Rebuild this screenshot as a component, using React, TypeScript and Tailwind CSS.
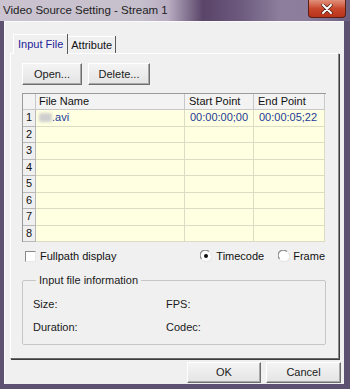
import React from "react";

const font = { fontFamily: '"Liberation Sans", Arial, sans-serif' };

const rows = [1, 2, 3, 4, 5, 6, 7, 8];

const Btn: React.FC<{ label: string; w: string; h?: string }> = ({ label, w, h = "h-[22px]" }) => (
  <div
    className={`${w} ${h} flex items-center justify-center text-[11px] text-[#1a1a1a] bg-gradient-to-b from-[#f4f4f4] to-[#e4e4e4] border border-t-white border-l-white border-r-[#6f6f6f] border-b-[#6f6f6f] shadow-[inset_-1px_-1px_0_#a8a8a8]`}
  >
    {label}
  </div>
);

const Radio: React.FC<{ on?: boolean }> = ({ on }) => (
  <svg width="12" height="12" viewBox="0 0 12 12">
    <circle cx="6" cy="6" r="5" fill="#fff" />
    <path d="M1.6 9 A5 5 0 0 1 9 1.6" stroke="#8c8c8c" strokeWidth="1.2" fill="none" />
    <path d="M10.4 3 A5 5 0 0 1 3 10.4" stroke="#e6e6e6" strokeWidth="1.2" fill="none" />
    {on && <circle cx="6" cy="6" r="2" fill="#111" />}
  </svg>
);

export default function App() {
  return (
    <div
      className="w-[350px] h-[389px] flex flex-col bg-[#5c5170] overflow-hidden"
      style={font}
    >
      {/* title bar */}
      <div className="h-[21px] flex items-start bg-[linear-gradient(90deg,#cbc4d0_0%,#c6bfcc_40%,#b9adc2_48%,#5a4569_58%,#6b587c_68%,#8c7e9c_80%,#8b7d9b_88%,#6d5f80_100%)]">
        <span className="pl-[3px] pt-[3px] text-[11.5px] text-[#1e1e1e] leading-[14px]">
          Video Source Setting - Stream 1
        </span>
        <div className="ml-auto mr-[4px] w-[38px] h-[18px] rounded-b-[4px] border border-t-0 border-[#5a2018] bg-gradient-to-b from-[#e0907a] via-[#c8482c] to-[#b83218] flex items-center justify-center">
          <svg width="12" height="10" viewBox="0 0 12 10">
            <path d="M2 1 L10 9 M10 1 L2 9" stroke="#3a1410" strokeWidth="3.2" strokeLinecap="round" />
            <path d="M2 1 L10 9 M10 1 L2 9" stroke="#ffffff" strokeWidth="2" strokeLinecap="round" />
          </svg>
        </div>
      </div>

      {/* client */}
      <div className="flex h-[363px]">
        <div className="w-[4px]" />
        <div className="w-[340px] bg-[#f0f0f0] border-t border-l border-[#fafafa] flex flex-col">
          {/* tabs */}
          <div className="mt-[11px] ml-[8px] flex items-end h-[20px]">
            <div className="h-[20px] px-[4px] flex items-center text-[11px] text-[#23239a] border-t border-l border-white shadow-[1px_0_0_#5a5a5a] bg-[#f0f0f0] relative z-10 -mb-[1px] pb-[1px]">
              Input File
            </div>
            <div className="h-[17px] ml-[1px] px-[3px] flex items-center text-[11px] text-[#111] border-t border-white shadow-[1px_0_0_#5a5a5a]">
              Attribute
            </div>
          </div>

          {/* panel */}
          <div className="ml-[5px] w-[329px] h-[306px] border border-t-white border-l-white border-r-[#8a8a8a] border-b-[#6a6a6a] shadow-[1px_1px_0_#3c3c3c] flex flex-col pl-[11px]">
            <div className="mt-[9px] flex gap-[6px]">
              <Btn label="Open..." w="w-[60px]" />
              <Btn label="Delete..." w="w-[62px]" />
            </div>

            {/* grid */}
            <div className="mt-[8px] w-[304px] border-l border-t border-[#9a9a9a] text-[11px]">
              <div className="flex h-[16px] bg-[#f3f3f3]">
                <div className="w-[13px] border-r border-b border-[#c8c8c8]" />
                <div className="w-[149px] border-r border-b border-[#c8c8c8] pl-[3px] leading-[15px] text-[#111]">File Name</div>
                <div className="w-[69px] border-r border-b border-[#c8c8c8] pl-[4px] leading-[15px] text-[#111]">Start Point</div>
                <div className="w-[71px] border-r border-b border-[#c8c8c8] pl-[4px] leading-[15px] text-[#111]">End Point</div>
              </div>
              {rows.map((r) => (
                <div key={r} className="flex h-[16.5px]">
                  <div className="w-[13px] bg-[#f0f0f0] border-r border-b border-[#b8b8b8] pl-[3px] leading-[15px] text-[#111]">
                    {r}
                  </div>
                  <div className="w-[149px] bg-[#ffffe1] border-r border-b border-[#dcdcc4] pl-[3px] leading-[15px] flex items-center">
                    {r === 1 && (
                      <>
                        <span className="w-[13px] h-[9px] bg-[#cfcfcf] blur-[1.5px] rounded-[2px]" />
                        <span className="text-[#1c3a98]">.avi</span>
                      </>
                    )}
                  </div>
                  <div className="w-[69px] bg-[#ffffe1] border-r border-b border-[#dcdcc4] pl-[5px] leading-[15px] text-[#1c3a98]">
                    {r === 1 && "00:00:00;00"}
                  </div>
                  <div className="w-[71px] bg-[#ffffe1] border-r border-b border-[#dcdcc4] pl-[5px] leading-[15px] text-[#1c3a98]">
                    {r === 1 && "00:00:05;22"}
                  </div>
                </div>
              ))}
            </div>

            {/* options row */}
            <div className="mt-[7px] w-[304px] h-[14px] flex items-center text-[11px] text-[#111]">
              <div className="ml-[3px] w-[11px] h-[11px] bg-white border border-t-[#8a8a8a] border-l-[#8a8a8a] border-r-[#e8e8e8] border-b-[#e8e8e8]" />
              <span className="ml-[4px]">Fullpath display</span>
              <div className="ml-auto flex items-center">
                <Radio on />
                <span className="ml-[4px]">Timecode</span>
                <div className="ml-[14px]">
                  <Radio />
                </div>
                <span className="ml-[3px] mr-[1px]">Frame</span>
              </div>
            </div>

            {/* group box */}
            <fieldset className="mt-[11px] w-[304px] h-[71px] border border-[#c6c6c6] rounded-[2px] px-[10px] text-[11px] text-[#1a1a1a]">
              <legend className="ml-[3px] px-[3px] leading-[13px]">Input file information</legend>
              <div className="mt-[11px] flex leading-[13px]">
                <span className="w-[133px]">Size:</span>
                <span>FPS:</span>
              </div>
              <div className="mt-[10px] flex leading-[13px]">
                <span className="w-[133px]">Duration:</span>
                <span>Codec:</span>
              </div>
            </fieldset>
          </div>

          {/* bottom buttons */}
          <div className="mt-[3px] flex justify-end gap-[5px] pr-[3px]">
            <Btn label="OK" w="w-[74px]" h="h-[21px]" />
            <Btn label="Cancel" w="w-[75px]" h="h-[21px]" />
          </div>
        </div>
        <div className="w-[6px]" />
      </div>
    </div>
  );
}
